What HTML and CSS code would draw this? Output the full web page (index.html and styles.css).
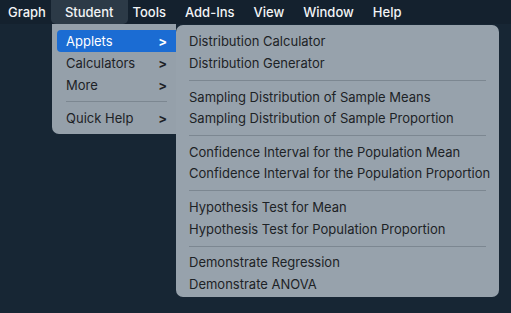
FILE: index.html
```html
<!DOCTYPE html>
<html lang="en">
<head>
    <meta charset="UTF-8">
    <title>Student Menu</title>
    <link rel="stylesheet" href="styles.css">
</head>
<body>
    <div class="menubar">
        <span class="menubar-item">Graph</span>
        <span class="menubar-item active">Student</span>
        <span class="menubar-item">Tools</span>
        <span class="menubar-item">Add-Ins</span>
        <span class="menubar-item">View</span>
        <span class="menubar-item">Window</span>
        <span class="menubar-item">Help</span>
    </div>

    <div class="menu student-menu">
        <div class="menu-item selected"><span>Applets</span><span class="chevron">&gt;</span></div>
        <div class="menu-item"><span>Calculators</span><span class="chevron">&gt;</span></div>
        <div class="menu-item"><span>More</span><span class="chevron">&gt;</span></div>
        <div class="separator"></div>
        <div class="menu-item"><span>Quick Help</span><span class="chevron">&gt;</span></div>
    </div>

    <div class="menu applets-menu">
        <div class="menu-item">Distribution Calculator</div>
        <div class="menu-item">Distribution Generator</div>
        <div class="separator"></div>
        <div class="menu-item">Sampling Distribution of Sample Means</div>
        <div class="menu-item">Sampling Distribution of Sample Proportion</div>
        <div class="separator"></div>
        <div class="menu-item">Confidence Interval for the Population Mean</div>
        <div class="menu-item">Confidence Interval for the Population Proportion</div>
        <div class="separator"></div>
        <div class="menu-item">Hypothesis Test for Mean</div>
        <div class="menu-item">Hypothesis Test for Population Proportion</div>
        <div class="separator"></div>
        <div class="menu-item">Demonstrate Regression</div>
        <div class="menu-item">Demonstrate ANOVA</div>
    </div>
</body>
</html>
```

FILE: styles.css
```css
body { margin: 0; height: 313px; background: #172634; font-family: Inter, "Noto Sans", sans-serif; font-size: 13px; overflow: hidden; }

.menubar { height: 24px; background: #14212e; display: flex; align-items: center; gap: 19px; padding-left: 8px; }
.menubar-item { color: #f2f4f6; font-weight: 500; line-height: 24px; }
.menubar-item.active { background: #2c3a47; padding: 0 14px; margin: 0 -14px; border-radius: 0 0 5px 5px; }

.menu { position: absolute; background: #95a0aa; color: #1d2226; box-sizing: border-box; }
.menu-item { height: 22px; line-height: 22px; display: flex; justify-content: space-between; border-radius: 4px; white-space: nowrap; }
.separator { height: 1px; background: #7c8791; margin: 5.5px 0 5.75px; }

.student-menu { left: 52px; top: 24px; width: 124px; height: 110px; padding: 6px 0 0 5px; border-radius: 0 0 0 7px; }
.student-menu .menu-item { padding: 0 9px 0 9px; }
.student-menu .menu-item.selected { background: #1b6cd3; color: #fff; border-radius: 4px 0 0 4px; }
.student-menu .separator { margin: 5px 9px 5px; }
.chevron { font-weight: 700; }

.applets-menu { left: 176px; top: 25px; width: 323px; height: 272px; padding: 6.25px 13px 0 13px; border-radius: 7px; background: #97a2ac; }
.applets-menu .menu-item { height: 21.5px; line-height: 21.5px; }
```
